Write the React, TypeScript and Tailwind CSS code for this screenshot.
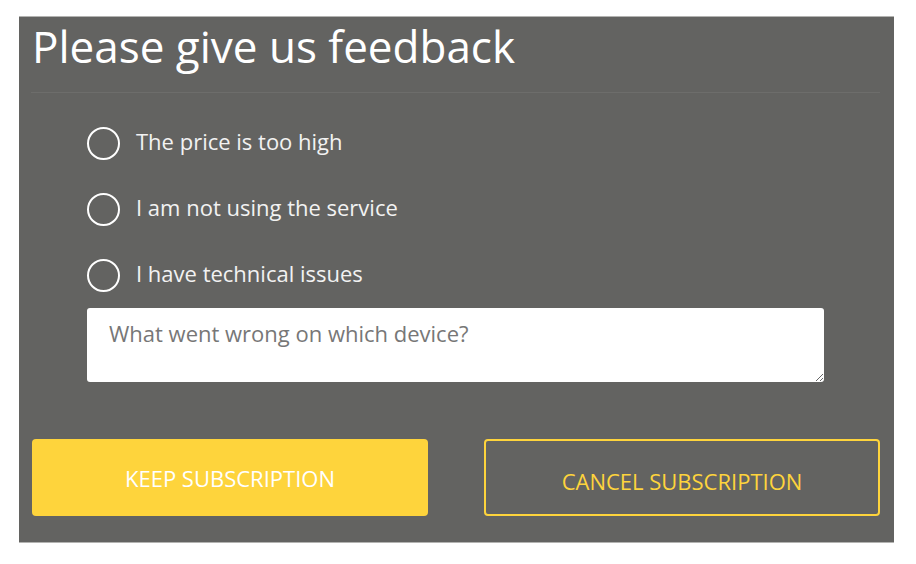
function Radio({ label }: { label: string }) {
  return (
    <label className="flex items-center h-[66px] cursor-pointer">
      <span className="w-[33px] h-[33px] rounded-full border-2 border-white shrink-0" />
      <span className="ml-[16px] pb-[3px] text-[22px] text-[#f2f2f2]">{label}</span>
    </label>
  );
}

function App() {
  return (
    <div className="bg-white w-[916px] h-[564px] pt-[16px] pl-[19px]" style={{ fontFamily: '"Open Sans", sans-serif' }}>
      <div className="w-[875px] h-[527px] bg-[#636361] border-y border-[#b3b3b1] flex flex-col pl-[12px] pr-[14px]">
        <h1 className="text-white text-[44px] font-medium leading-[56px] mt-[1px] ml-[1px]">Please give us feedback</h1>
        <div className="h-px bg-[#6d6d6b] mt-[18px]" />
        <div className="ml-[56px] mr-[56px] mt-[17px] flex flex-col">
          <Radio label="The price is too high" />
          <Radio label="I am not using the service" />
          <Radio label="I have technical issues" />
          <textarea
            className="block h-[74px] w-full bg-white rounded-[3px] px-[22px] pt-[9px] pb-[11px] text-[22px] text-[#555] placeholder:text-[#777] outline-none resize-y"
            placeholder="What went wrong on which device?"
          />
        </div>
        <div className="mt-[57px] flex gap-[56px] ml-[1px]">
          <button className="w-[396px] h-[77px] rounded-[4px] bg-[#fed43c] text-white text-[22px] uppercase pt-[2px]">
            Keep subscription
          </button>
          <button className="w-[396px] h-[77px] rounded-[4px] border-2 border-[#fed43c] text-[#fed43c] text-[22px] uppercase pt-[8px]">
            Cancel subscription
          </button>
        </div>
      </div>
    </div>
  );
}

export default App;
